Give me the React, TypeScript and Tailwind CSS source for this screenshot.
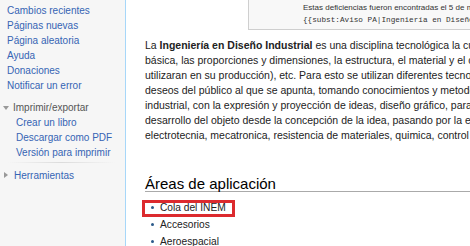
export default function App() {
  const links = [
    "Cambios recientes",
    "Páginas nuevas",
    "Página aleatoria",
    "Ayuda",
    "Donaciones",
    "Notificar un error",
  ];
  const sub = ["Crear un libro", "Descargar como PDF", "Versión para imprimir"];
  return (
    <div className="w-[470px] h-[246px] overflow-hidden flex bg-white font-['Liberation_Sans',Arial,sans-serif]">
      <aside className="w-[125px] shrink-0 bg-[#f6f6f6] pt-[2.5px] text-[10px] leading-[15px]">
        <ul className="pl-[7px] text-[#3564b4]">
          {links.map((l) => (
            <li key={l} className="whitespace-nowrap">{l}</li>
          ))}
        </ul>
        <div className="mt-[7.5px] flex items-center pl-[3px] text-[#555]">
          <span className="w-0 h-0 border-l-[3px] border-r-[3px] border-t-[4px] border-l-transparent border-r-transparent border-t-[#999] mr-[4px]" />
          <span className="whitespace-nowrap">Imprimir/exportar</span>
        </div>
        <ul className="pl-[16px] text-[#3564b4]">
          {sub.map((l) => (
            <li key={l} className="whitespace-nowrap">{l}</li>
          ))}
        </ul>
        <div className="mt-[2px] ml-[8px] mr-[10px] h-px bg-gradient-to-r from-[#f6f6f6] via-[#dcdcdc] to-[#f6f6f6]" />
        <div className="mt-[4.5px] flex items-center pl-[4px] text-[#3564b4]">
          <span className="w-0 h-0 border-t-[3px] border-b-[3px] border-l-[4px] border-t-transparent border-b-transparent border-l-[#999] mr-[6px]" />
          <span className="whitespace-nowrap">Herramientas</span>
        </div>
      </aside>
      <main className="flex-1 border-l border-[#a7d7f9] overflow-hidden pl-[19px]">
        <div className="ml-[103px] w-[300px] h-[30px] border-l border-b border-[#cfcfcf] bg-[#f8f8f8] pl-[54px] pt-[2px] text-[8px] leading-[12px] text-[#333] whitespace-nowrap">
          <div>Estas deficiencias fueron encontradas el 5 de mayo</div>
          <div className="font-['Liberation_Mono','Courier_New',monospace] text-[7.7px]">
            {"{{subst:Aviso PA|Ingeniería en Diseño Industrial}}"}
          </div>
        </div>
        <div className="mt-[7.5px] text-[10.5px] leading-[15px] text-[#222] whitespace-nowrap">
          <div>
            La <b>Ingeniería en Diseño Industrial</b> es una disciplina tecnológica la cual
          </div>
          <div>básica, las proporciones y dimensiones, la estructura, el material y el color</div>
          <div>utilizaran en su producción), etc. Para esto se utilizan diferentes tecnologías</div>
          <div>deseos del público al que se apunta, tomando conocimientos y metodologías</div>
          <div>industrial, con la expresión y proyección de ideas, diseño gráfico, para la</div>
          <div>desarrollo del objeto desde la concepción de la idea, pasando por la estética</div>
          <div>electrotecnia, mecatronica, resistencia de materiales, quimica, control de</div>
        </div>
        <h2 className="mt-[33px] text-[15px] leading-[15px] text-black border-b border-[#aaa] whitespace-nowrap">
          Áreas de aplicación
        </h2>
        <ul className="mt-[7.5px] pl-[6px] text-[10.2px] leading-[17px] text-[#222]">
          {["Cola del INEM", "Accesorios", "Aeroespacial"].map((t, i) => (
            <li key={t} className="relative flex items-center whitespace-nowrap">
              <span className="w-[3px] h-[3px] rounded-full bg-[#2b5a8a] mr-[6px]" />
              {t}
              {i === 0 && (
                <span className="absolute left-[-9px] top-[1px] w-[93px] h-[17px] border-[3px] border-[#dc2a2e]" />
              )}
            </li>
          ))}
        </ul>
      </main>
    </div>
  );
}
